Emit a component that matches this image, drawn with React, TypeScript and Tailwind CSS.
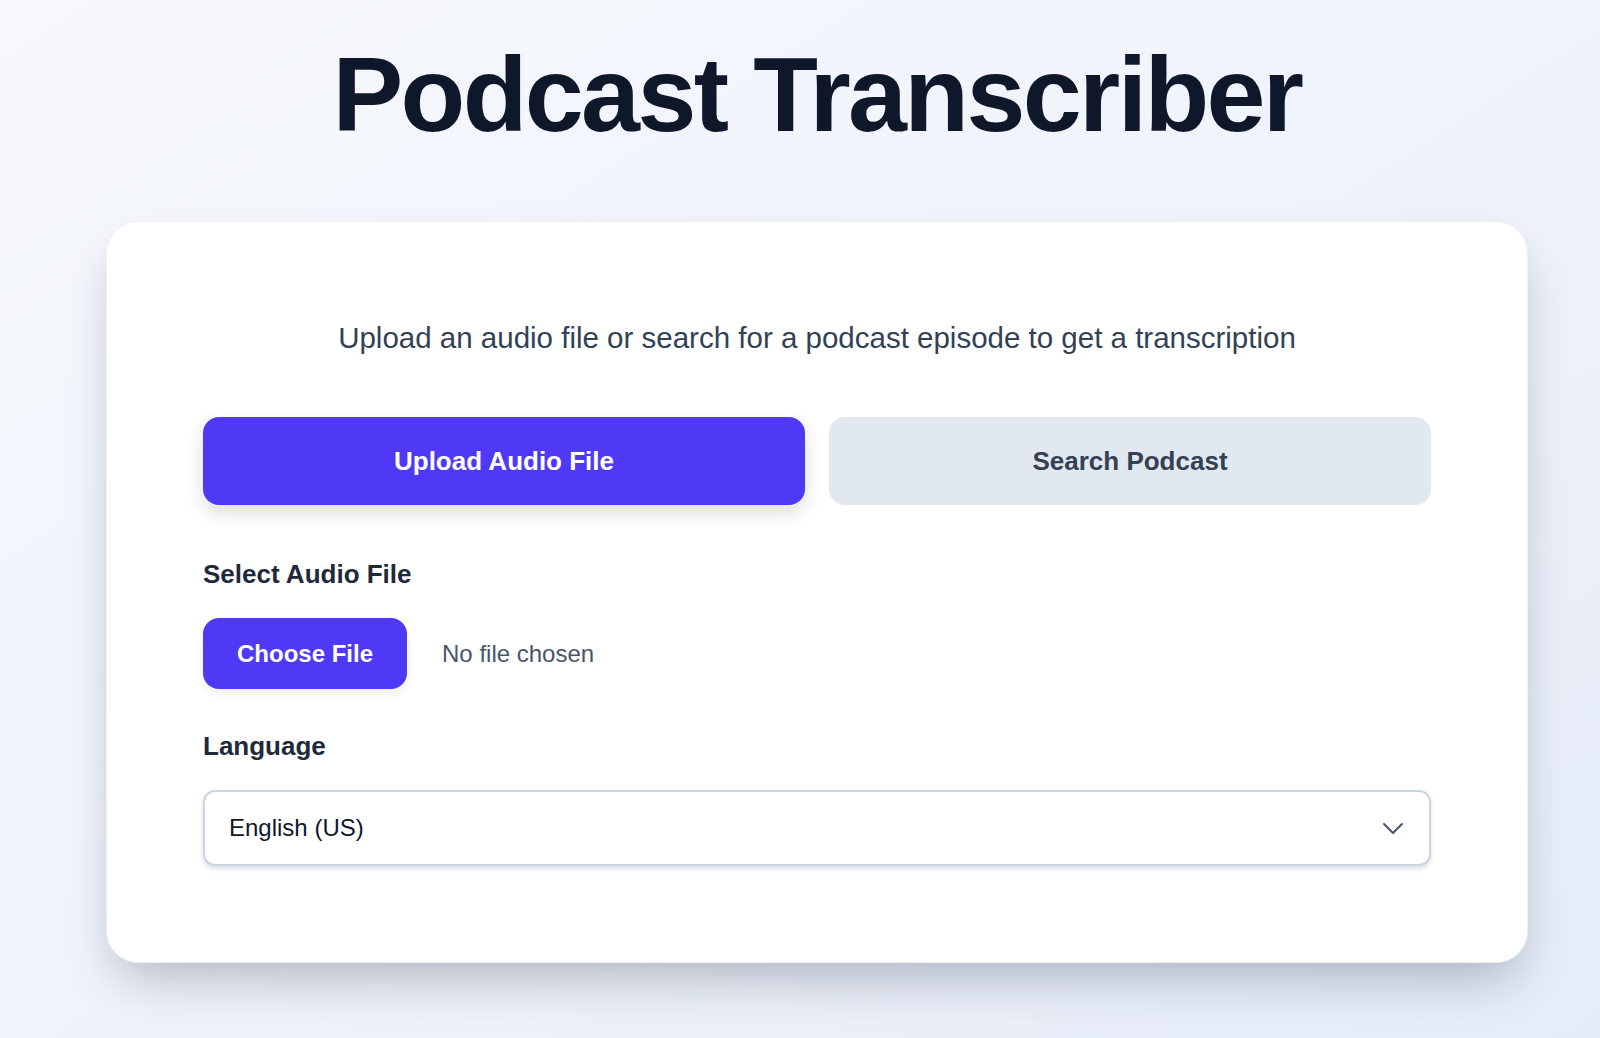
import React from "react";

function Chevron() {
  return (
    <svg width="20" height="11" viewBox="0 0 20 11" fill="none" aria-hidden="true">
      <path d="M1 1l9 9 9-9" stroke="#475569" strokeWidth="2" strokeLinecap="round" strokeLinejoin="round" />
    </svg>
  );
}

export default function App() {
  return (
    <div
      className="min-h-screen w-full bg-gradient-to-br from-[#f6f8fc] via-[#eff3fb] to-[#e5ebf8] pl-[106px] pr-[72px] pt-[41px] pb-[76px]"
      style={{ fontFamily: '"Liberation Sans", Arial, Helvetica, sans-serif' }}
    >
      <h1 className="text-center text-[106px] font-bold leading-none tracking-tight text-[#0f172a]">
        Podcast Transcriber
      </h1>

      <div className="mt-[74px] rounded-[32px] border border-[#eef1f7] bg-white p-24 shadow-[0_25px_50px_-12px_rgba(15,23,42,0.28)]">
        <p className="text-center text-[29.5px] leading-10 text-[#334155]">
          Upload an audio file or search for a podcast episode to get a transcription
        </p>

        <div className="mt-[59px] grid grid-cols-2 gap-6">
          <button className="h-[88px] rounded-2xl bg-[#4f39f6] text-[26px] font-bold text-white shadow-[0_8px_18px_rgba(15,23,42,0.14)]">
            Upload Audio File
          </button>
          <button className="h-[88px] rounded-2xl bg-[#e2e8f0] text-[26px] font-bold text-[#334155]">
            Search Podcast
          </button>
        </div>

        <div className="mt-[51px]">
          <label className="block text-[26px] font-bold leading-9 text-[#1e293b]">Select Audio File</label>
          <div className="mt-[26px] flex items-center gap-[35px]">
            <button className="h-[71px] rounded-2xl bg-[#4f39f6] px-[34px] text-[24px] font-bold text-white shadow-[0_4px_10px_rgba(15,23,42,0.08)]">
              Choose File
            </button>
            <span className="text-[24px] text-[#475569]">No file chosen</span>
          </div>
        </div>

        <div className="mt-[39px]">
          <label className="block text-[26px] font-bold leading-9 text-[#1e293b]">Language</label>
          <div className="mt-[26px] flex h-[76px] items-center justify-between rounded-xl border-2 border-[#cbd5e1] bg-white pl-6 pr-[26px] shadow-[0_3px_5px_rgba(100,116,139,0.22)]">
            <span className="text-[24px] text-[#0f172a]">English (US)</span>
            <Chevron />
          </div>
        </div>
      </div>
    </div>
  );
}
